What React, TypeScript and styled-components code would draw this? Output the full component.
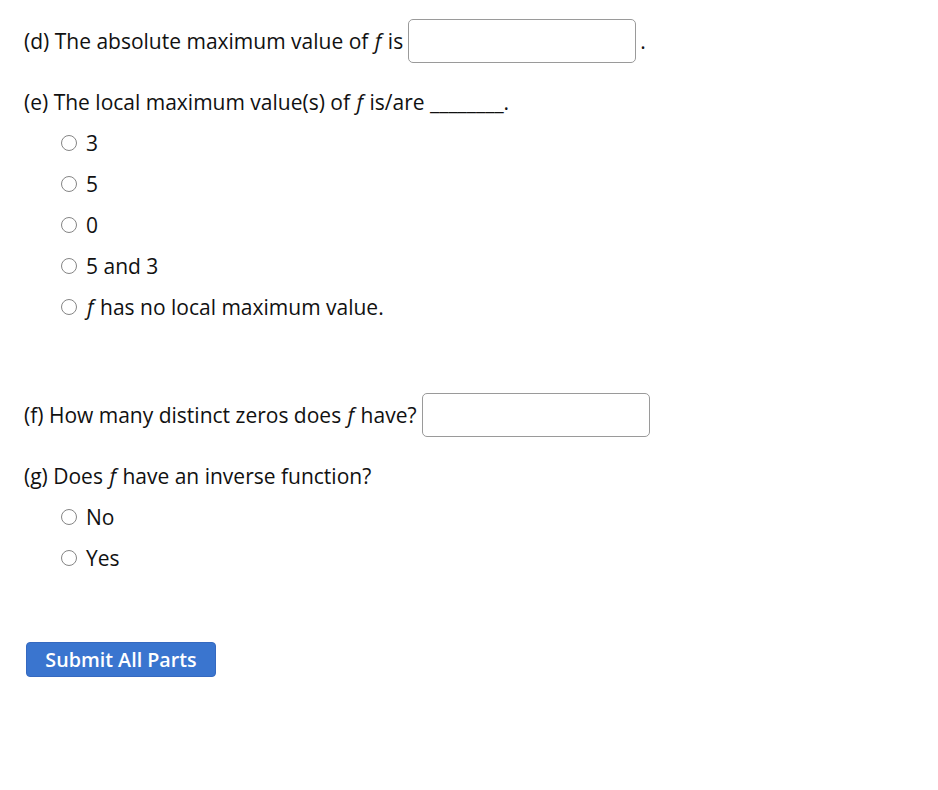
import React from 'react';
import styled, { createGlobalStyle } from 'styled-components';

const GlobalStyle = createGlobalStyle`
  html, body {
    margin: 0;
    padding: 0;
    background: #ffffff;
  }
  body {
    font-family: 'Open Sans', 'Noto Sans', sans-serif;
    font-size: 21px;
    font-weight: 500;
    color: #111111;
    -webkit-font-smoothing: antialiased;
  }
`;

const Page = styled.div`
  padding: 19px 0 40px 24px;
  display: flex;
  flex-direction: column;
  align-items: flex-start;
`;

const Part = styled.div<{ $top?: number }>`
  margin-top: ${({ $top }) => $top ?? 0}px;
  display: flex;
  flex-direction: column;
`;

const PromptLine = styled.div`
  display: flex;
  align-items: center;
  min-height: 30px;
  white-space: pre;
`;

const Var = styled.i`
  font-style: italic;
  margin: 0 1px;
`;

const AnswerBox = styled.input.attrs({ type: 'text' })`
  box-sizing: border-box;
  width: 228px;
  height: 44px;
  margin: 0 4px 0 5px;
  border: 1px solid #9a9a9a;
  border-radius: 5px;
  background: #ffffff;
  font: inherit;
  padding: 0 8px;
  outline: none;
`;

const Choices = styled.div<{ $top: number }>`
  margin-top: ${({ $top }) => $top}px;
  padding-left: 37px;
  display: flex;
  flex-direction: column;
`;

const Choice = styled.label`
  display: flex;
  align-items: center;
  height: 41px;
  gap: 9px;
  cursor: pointer;
  white-space: pre;
`;

const Radio = styled.input.attrs({ type: 'radio' })`
  appearance: none;
  -webkit-appearance: none;
  box-sizing: border-box;
  width: 16px;
  height: 16px;
  margin: 0;
  border: 1px solid #858585;
  border-radius: 50%;
  background: #ffffff;
  flex-shrink: 0;

  &:checked {
    background: radial-gradient(circle, #1a73e8 0 4px, #ffffff 4.5px);
    border-color: #1a73e8;
  }
`;

const SubmitButton = styled.button`
  margin-top: 64px;
  margin-left: 2px;
  box-sizing: border-box;
  width: 190px;
  height: 35px;
  border: 1px solid #3569c0;
  border-radius: 4px;
  background: #3a75cf;
  color: #ffffff;
  font-family: 'Open Sans', 'Noto Sans', sans-serif;
  font-size: 19.7px;
  font-weight: 600;
  cursor: pointer;
  padding: 0;
`;

const F = () => <Var>f</Var>;

export default function App() {
  return (
    <>
      <GlobalStyle />
      <Page>
        <Part>
          <PromptLine>
            (d) The absolute maximum value of <F /> is
            <AnswerBox aria-label="absolute maximum" />.
          </PromptLine>
        </Part>

        <Part $top={24}>
          <PromptLine>
            (e) The local maximum value(s) of <F /> is/are ________.
          </PromptLine>
          <Choices $top={5}>
            <Choice><Radio name="e" />3</Choice>
            <Choice><Radio name="e" />5</Choice>
            <Choice><Radio name="e" />0</Choice>
            <Choice><Radio name="e" />5 and 3</Choice>
            <Choice><Radio name="e" /><span><F /> has no local maximum value.</span></Choice>
          </Choices>
        </Part>

        <Part $top={66}>
          <PromptLine>
            (f) How many distinct zeros does <F /> have?
            <AnswerBox aria-label="number of zeros" />
          </PromptLine>
        </Part>

        <Part $top={24}>
          <PromptLine>
            (g) Does <F /> have an inverse function?
          </PromptLine>
          <Choices $top={5}>
            <Choice><Radio name="g" />No</Choice>
            <Choice><Radio name="g" />Yes</Choice>
          </Choices>
        </Part>

        <SubmitButton type="button">Submit All Parts</SubmitButton>
      </Page>
    </>
  );
}
